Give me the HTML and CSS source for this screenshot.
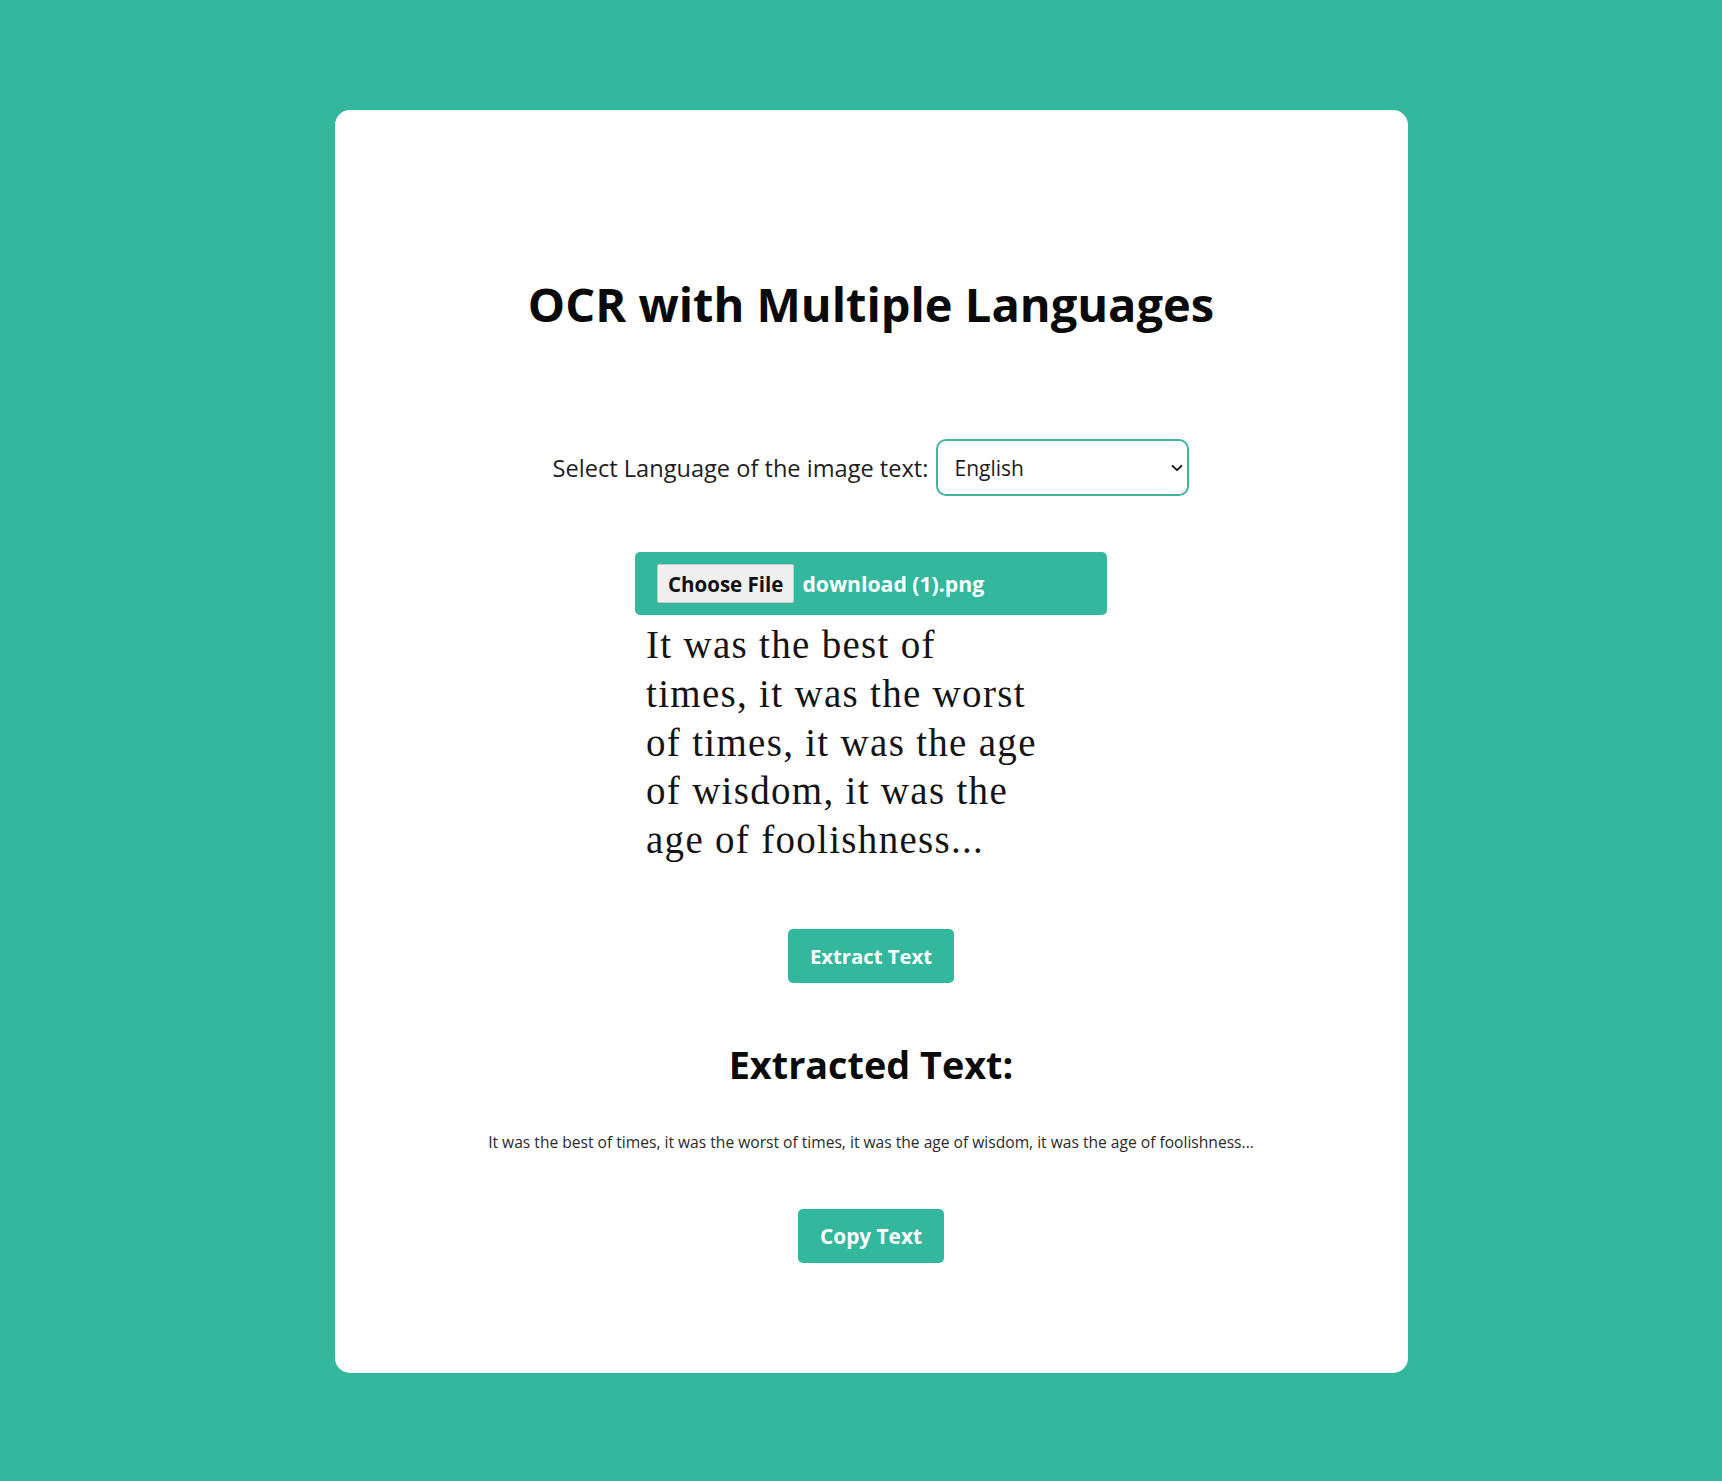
FILE: index.html
```html
<!DOCTYPE html>
<html lang="en">
<head>
<meta charset="utf-8">
<title>OCR with Multiple Languages</title>
<link rel="stylesheet" href="styles.css">
</head>
<body>
  <main class="card">
    <h1 class="title">OCR with Multiple Languages</h1>

    <div class="lang-row">
      <label class="lang-label" for="lang">Select Language of the image text:</label>
      <div class="select-wrap">
        <select id="lang" class="lang-select">
          <option>English</option>
          <option>French</option>
          <option>German</option>
          <option>Spanish</option>
        </select>
        <svg class="chevron" width="12" height="8" viewBox="0 0 12 8" aria-hidden="true">
          <path d="M1.5 1.8 L6 6.2 L10.5 1.8" fill="none" stroke="#111" stroke-width="1.8" stroke-linecap="round" stroke-linejoin="round"/>
        </svg>
      </div>
    </div>

    <div class="file-bar">
      <span class="file-btn">Choose File</span>
      <span class="file-name">download (1).png</span>
    </div>

    <div class="preview">
      <p class="preview-text">It was the best of<br>times, it was the worst<br>of times, it was the age<br>of wisdom, it was the<br>age of foolishness...</p>
    </div>

    <button class="btn btn-extract" type="button">Extract Text</button>

    <h2 class="result-title">Extracted Text:</h2>
    <p class="result-text">It was the best of times, it was the worst of times, it was the age of wisdom, it was the age of foolishness...</p>

    <button class="btn btn-copy" type="button">Copy Text</button>
  </main>
</body>
</html>
```

FILE: styles.css
```css
html, body {
  margin: 0;
  padding: 0;
}

body {
  background: #33b89e;
  font-family: "Open Sans", "Noto Sans", sans-serif;
  color: #111;
  display: flex;
  justify-content: center;
  padding: 110px 0 108px 20px;
}

.card {
  width: 1073px;
  box-sizing: border-box;
  background: #ffffff;
  border-radius: 15px;
  padding: 162px 0 110px;
  display: flex;
  flex-direction: column;
  align-items: center;
}

.title {
  margin: 0;
  font-size: 47px;
  line-height: 64px;
  font-weight: 700;
  color: #0a0a0a;
}

.lang-row {
  margin-top: 103px;
  display: flex;
  align-items: center;
  gap: 8px;
  height: 57px;
}

.lang-label {
  font-size: 23.6px;
  color: #1e1e1e;
}

.select-wrap {
  position: relative;
  width: 253px;
  height: 57px;
}

.lang-select {
  appearance: none;
  -webkit-appearance: none;
  width: 100%;
  height: 100%;
  box-sizing: border-box;
  border: 2.5px solid #43b39d;
  border-radius: 10px;
  background: #fff;
  padding: 0 30px 0 16px;
  font-family: "Open Sans", "Noto Sans", sans-serif;
  font-size: 21px;
  color: #1e1e1e;
  outline: none;
}

.chevron {
  position: absolute;
  right: 6px;
  top: 25px;
  pointer-events: none;
}

.file-bar {
  margin-top: 56px;
  width: 472px;
  height: 63px;
  box-sizing: border-box;
  background: #33b89e;
  border-radius: 5px;
  padding: 0 0 0 22px;
  display: flex;
  align-items: center;
  gap: 8px;
}

.file-btn {
  height: 39px;
  box-sizing: border-box;
  padding: 0 10px;
  display: flex;
  align-items: center;
  background: #efefef;
  border: 1px solid #c9c9c9;
  border-radius: 2px;
  font-size: 20.5px;
  font-weight: 700;
  color: #111;
}

.file-name {
  font-size: 21.2px;
  font-weight: 700;
  color: #ffffff;
}

.preview {
  width: 472px;
  box-sizing: border-box;
  padding: 6px 0 0 11px;
}

.preview-text {
  margin: 0;
  font-family: "Liberation Serif", "Times New Roman", serif;
  font-size: 39px;
  line-height: 48.75px;
  letter-spacing: 1.3px;
  color: #141414;
}

.btn {
  height: 54px;
  padding: 0 22px;
  border: none;
  border-radius: 5px;
  background: #33b89e;
  color: #ffffff;
  font-family: "Open Sans", "Noto Sans", sans-serif;
  font-size: 20.3px;
  font-weight: 700;
  cursor: pointer;
}

.btn-extract {
  margin-top: 64px;
}

.result-title {
  margin: 56px 0 0;
  font-size: 37.8px;
  line-height: 51px;
  font-weight: 700;
  color: #0a0a0a;
}

.result-text {
  margin: 42px 0 0;
  font-size: 15.6px;
  line-height: 21px;
  color: #2a2a2a;
}

.btn-copy {
  margin-top: 56px;
  font-size: 20.8px;
}
```
